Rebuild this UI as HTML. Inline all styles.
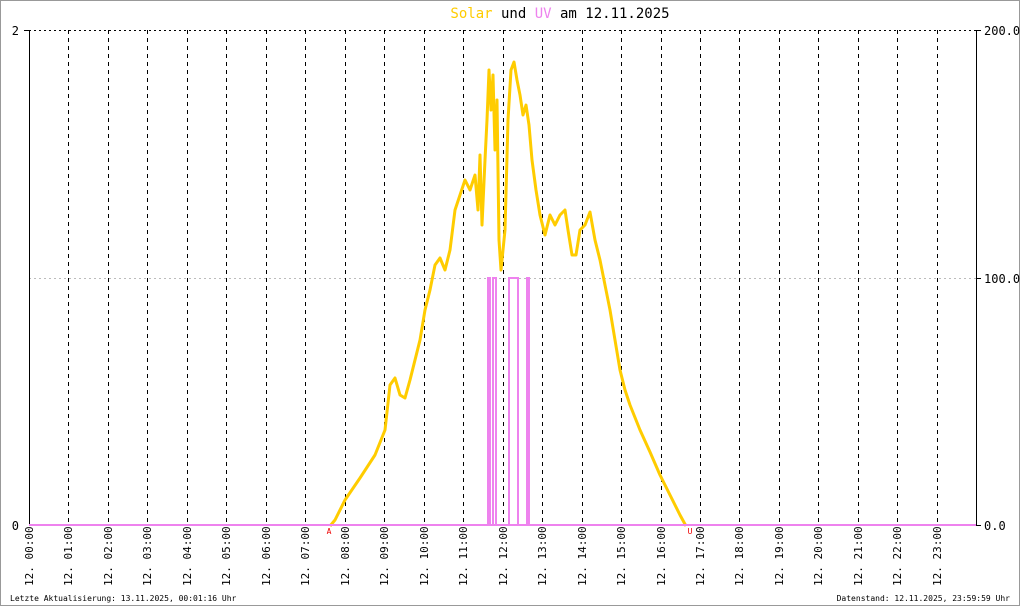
<!DOCTYPE html>
<html><head><meta charset="utf-8"><style>
html,body{margin:0;padding:0;background:#fff}
svg{display:block}
text{font-family:"DejaVu Sans Mono","Liberation Mono",monospace}
</style></head><body>
<svg width="1020" height="606" viewBox="0 0 1020 606" xmlns="http://www.w3.org/2000/svg">
<rect x="0.5" y="0.5" width="1019" height="605" fill="#fff" stroke="#999" stroke-width="1"/>
<text x="560" y="18" font-size="14" text-anchor="middle"><tspan fill="#ffcc00">Solar</tspan><tspan fill="#000"> und </tspan><tspan fill="#ee82ee">UV</tspan><tspan fill="#000"> am 12.11.2025</tspan></text>
<line x1="29" y1="30.5" x2="976" y2="30.5" stroke="#000" stroke-dasharray="2,3"/>
<line x1="29" y1="278.5" x2="976" y2="278.5" stroke="#bbb" stroke-dasharray="2,3"/>
<g stroke="#000" stroke-dasharray="4,4" stroke-width="1">
<line x1="68.5" y1="30" x2="68.5" y2="526"/><line x1="108.5" y1="30" x2="108.5" y2="526"/><line x1="147.5" y1="30" x2="147.5" y2="526"/><line x1="187.5" y1="30" x2="187.5" y2="526"/><line x1="226.5" y1="30" x2="226.5" y2="526"/><line x1="266.5" y1="30" x2="266.5" y2="526"/><line x1="305.5" y1="30" x2="305.5" y2="526"/><line x1="345.5" y1="30" x2="345.5" y2="526"/><line x1="384.5" y1="30" x2="384.5" y2="526"/><line x1="424.5" y1="30" x2="424.5" y2="526"/><line x1="463.5" y1="30" x2="463.5" y2="526"/><line x1="503.5" y1="30" x2="503.5" y2="526"/><line x1="542.5" y1="30" x2="542.5" y2="526"/><line x1="582.5" y1="30" x2="582.5" y2="526"/><line x1="621.5" y1="30" x2="621.5" y2="526"/><line x1="661.5" y1="30" x2="661.5" y2="526"/><line x1="700.5" y1="30" x2="700.5" y2="526"/><line x1="739.5" y1="30" x2="739.5" y2="526"/><line x1="779.5" y1="30" x2="779.5" y2="526"/><line x1="818.5" y1="30" x2="818.5" y2="526"/><line x1="858.5" y1="30" x2="858.5" y2="526"/><line x1="897.5" y1="30" x2="897.5" y2="526"/><line x1="937.5" y1="30" x2="937.5" y2="526"/>
</g>
<line x1="29.5" y1="30" x2="29.5" y2="526" stroke="#000"/>
<line x1="976.5" y1="30" x2="976.5" y2="526" stroke="#000"/>
<line x1="24" y1="30.5" x2="29" y2="30.5" stroke="#000"/>
<line x1="976" y1="30.5" x2="981" y2="30.5" stroke="#000"/>
<line x1="976" y1="278.5" x2="981" y2="278.5" stroke="#000"/>
<line x1="976" y1="525.5" x2="981" y2="525.5" stroke="#000"/>
<g font-size="12" fill="#000">
<text x="19" y="35" text-anchor="end">2</text>
<text x="19" y="530" text-anchor="end">0</text>
<text x="984" y="35">200.0</text>
<text x="984" y="283">100.0</text>
<text x="984" y="530">0.0</text>
</g>
<polyline fill="none" stroke="#ffcc00" stroke-width="3" stroke-linejoin="round" points="330,526 335,520 345,500 360,478 375,455 385,430 390,385 395,378 400,395 405,398 410,380 415,360 420,340 425,310 430,290 435,265 440,258 445,270 450,250 455,210 460,195 465,180 470,190 475,175 478,210 480,155 482,225 485,160 487,120 489,70 491,110 493,75 495,150 497,100 499,240 501,270 503,250 505,230 508,120 511,70 514,62 517,80 520,95 523,115 526,105 529,125 532,160 536,190 540,215 545,235 550,215 555,225 560,215 565,210 568,230 572,255 576,255 580,230 585,225 590,212 595,240 600,260 605,285 610,310 615,340 620,370 625,390 630,405 640,430 650,452 660,475 670,495 680,515 686,526"/>
<line x1="29" y1="525" x2="976" y2="525" stroke="#ee82ee" stroke-width="2"/>
<g fill="none" stroke="#ee82ee" stroke-width="2">
<polyline points="488,525 488,278 490,278 490,525"/>
<polyline points="493,525 493,278 496,278 496,525"/>
<polyline points="509,525 509,278 518,278 518,525"/>
<polyline points="527,525 527,278 529,278 529,525"/>
</g>
<text x="329" y="534" font-size="8" fill="#e00" text-anchor="middle">A</text>
<text x="690" y="534" font-size="8" fill="#e00" text-anchor="middle">U</text>
<g font-size="11" fill="#000">
<text transform="translate(33,586) rotate(-90)">12. 00:00</text><text transform="translate(72,586) rotate(-90)">12. 01:00</text><text transform="translate(112,586) rotate(-90)">12. 02:00</text><text transform="translate(151,586) rotate(-90)">12. 03:00</text><text transform="translate(191,586) rotate(-90)">12. 04:00</text><text transform="translate(230,586) rotate(-90)">12. 05:00</text><text transform="translate(270,586) rotate(-90)">12. 06:00</text><text transform="translate(309,586) rotate(-90)">12. 07:00</text><text transform="translate(349,586) rotate(-90)">12. 08:00</text><text transform="translate(388,586) rotate(-90)">12. 09:00</text><text transform="translate(428,586) rotate(-90)">12. 10:00</text><text transform="translate(467,586) rotate(-90)">12. 11:00</text><text transform="translate(507,586) rotate(-90)">12. 12:00</text><text transform="translate(546,586) rotate(-90)">12. 13:00</text><text transform="translate(586,586) rotate(-90)">12. 14:00</text><text transform="translate(625,586) rotate(-90)">12. 15:00</text><text transform="translate(665,586) rotate(-90)">12. 16:00</text><text transform="translate(704,586) rotate(-90)">12. 17:00</text><text transform="translate(743,586) rotate(-90)">12. 18:00</text><text transform="translate(783,586) rotate(-90)">12. 19:00</text><text transform="translate(822,586) rotate(-90)">12. 20:00</text><text transform="translate(862,586) rotate(-90)">12. 21:00</text><text transform="translate(901,586) rotate(-90)">12. 22:00</text><text transform="translate(941,586) rotate(-90)">12. 23:00</text>
</g>
<text x="10" y="601" font-size="8" fill="#000">Letzte Aktualisierung: 13.11.2025, 00:01:16 Uhr</text>
<text x="1010" y="601" font-size="8" fill="#000" text-anchor="end">Datenstand: 12.11.2025, 23:59:59 Uhr</text>
</svg>
</body></html>
